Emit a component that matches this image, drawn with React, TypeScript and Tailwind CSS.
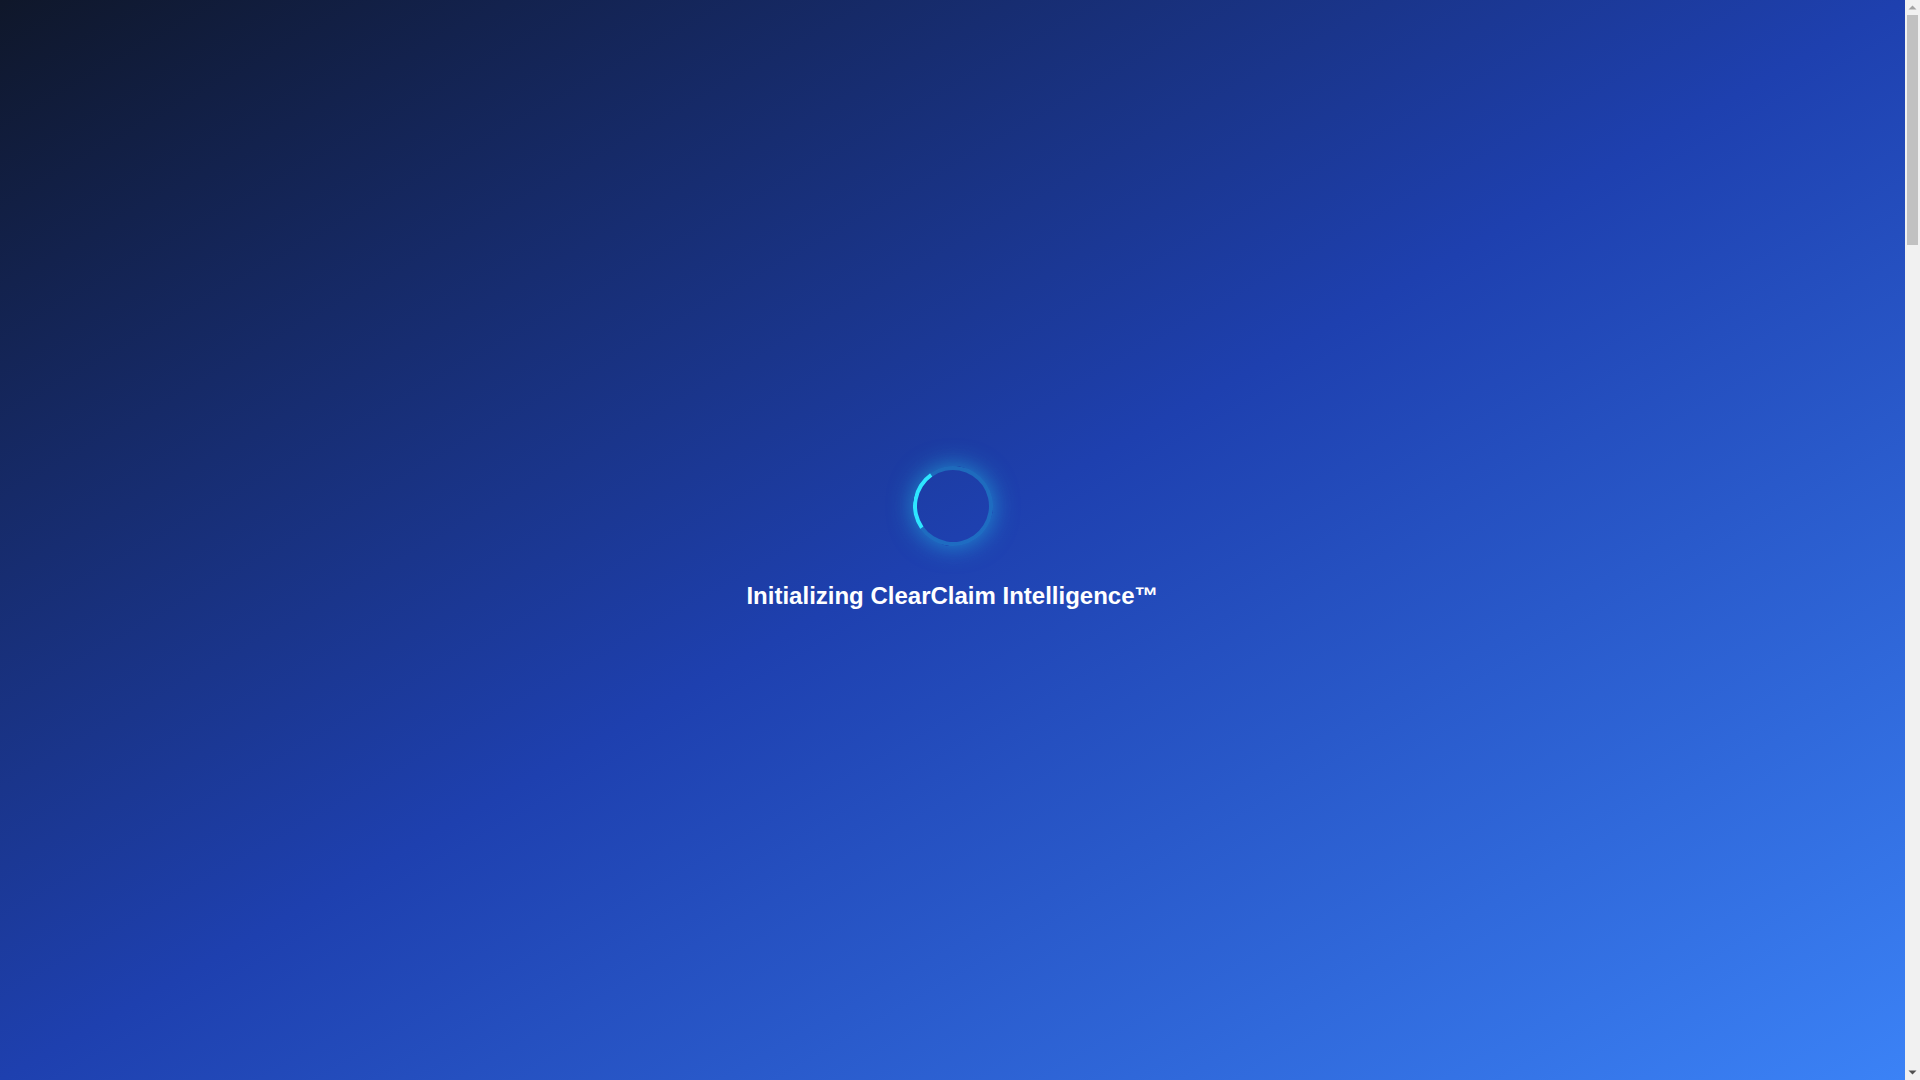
import React from "react";

function ScrollArrow({ dir, color }: { dir: "up" | "down"; color: string }) {
  return (
    <svg width="15" height="15" viewBox="0 0 15 15" className="block shrink-0">
      {dir === "up" ? (
        <polygon points="3.5,9.5 11.5,9.5 7.5,5.5" fill={color} />
      ) : (
        <polygon points="3.5,5.5 11.5,5.5 7.5,9.5" fill={color} />
      )}
    </svg>
  );
}

export default function App() {
  return (
    <div className="flex h-screen w-full overflow-hidden" style={{ fontFamily: '"Liberation Sans", Arial, sans-serif' }}>
      <main className="flex flex-1 flex-col items-center justify-center bg-linear-to-br/srgb from-[#0f172a] via-[#1e40af] to-[#3b82f6] pb-[3px]">
        <div className="mb-[34px] h-20 w-20 rotate-[-80deg] rounded-full border-4 border-[#22d3ee]/30 border-t-[#2ee6ff] shadow-[0_0_24px_rgba(34,211,238,0.55)]" />
        <h2 className="text-2xl font-bold leading-8 text-white">Initializing ClearClaim Intelligence™</h2>
      </main>
      <aside className="flex w-[15px] flex-col bg-[#f1f1f1]">
        <ScrollArrow dir="up" color="#a3a3a3" />
        <div className="mx-[2px] h-[230px] bg-[#c1c1c1]" />
        <div className="flex-1" />
        <ScrollArrow dir="down" color="#505050" />
      </aside>
    </div>
  );
}
